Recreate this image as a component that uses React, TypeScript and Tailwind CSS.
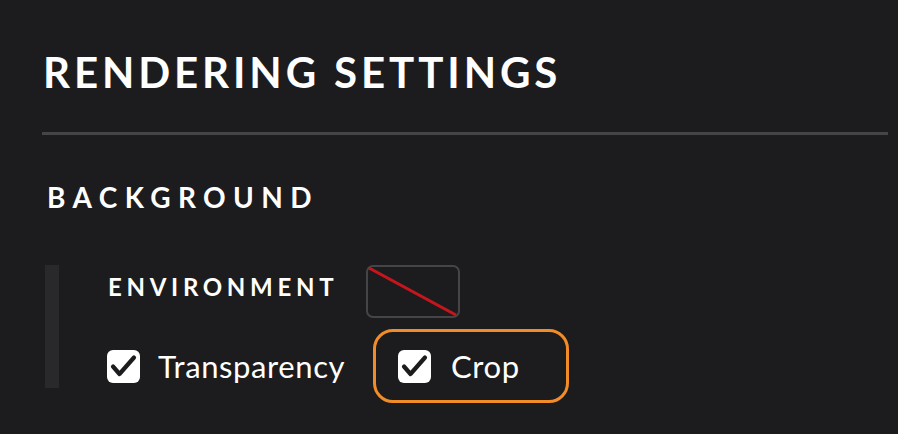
function CheckBox() {
  return (
    <svg aria-hidden="true" width="33" height="33" viewBox="0 0 33 33" className="shrink-0">
      <rect x="0" y="0" width="33" height="33" rx="6" fill="#ffffff" />
      <path
        d="M6 16.5l6.5 7.5L27 7.5"
        fill="none"
        stroke="#1c1c1e"
        strokeWidth="4.2"
        strokeLinecap="round"
        strokeLinejoin="round"
      />
    </svg>
  );
}

function Check({ label, gap }: { label: string; gap: string }) {
  return (
    <div className={`flex items-center ${gap}`}>
      <CheckBox />
      <span className="text-[31px] leading-none tracking-[0.6px] text-white">{label}</span>
    </div>
  );
}

export default function App() {
  return (
    <div className="h-[434px] w-[898px] overflow-hidden bg-[#1c1c1e] font-['Lato','Liberation_Sans',sans-serif]">
      <h1 className="ml-[43px] mt-[51px] text-[42px] font-bold leading-none tracking-[3.9px] text-white">
        RENDERING SETTINGS
      </h1>
      <div className="ml-[42px] mt-[39px] h-[3px] w-[846px] bg-[#454545]" />
      <h2 className="ml-[47px] mt-[48px] text-[28px] font-bold leading-none tracking-[7.4px] text-white">
        BACKGROUND
      </h2>
      <div className="ml-[45px] mt-[54px] flex">
        <div className="h-[123px] w-[14px] shrink-0 bg-[#29292b]" />
        <div className="ml-[48px] flex flex-col gap-[11px]">
          <div className="flex items-start pl-[1px]">
            <span className="mt-[10px] w-[258px] text-[24px] font-bold leading-none tracking-[4.7px] text-white">
              ENVIRONMENT
            </span>
            <div className="h-[53px] w-[94px] rounded-[7px] border-2 border-[#454547]">
              <svg aria-hidden="true" className="h-full w-full" viewBox="0 0 90 49">
                <line x1="1" y1="1" x2="88" y2="48" stroke="#c4161c" strokeWidth="3" />
              </svg>
            </div>
          </div>
          <div className="flex items-center">
            <div className="w-[266px]">
              <Check label="Transparency" gap="gap-[18px]" />
            </div>
            <div className="flex h-[74px] w-[196px] items-center rounded-[20px] border-[3px] border-[#f28c28] pl-[22px]">
              <Check label="Crop" gap="gap-[20px]" />
            </div>
          </div>
        </div>
      </div>
    </div>
  );
}
